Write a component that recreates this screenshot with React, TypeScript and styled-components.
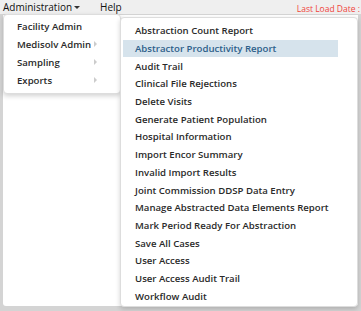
import React from 'react';
import styled, { createGlobalStyle } from 'styled-components';

const ADMIN_ITEMS = [
	{ id: 1, label: 'Facility Admin', sub: false },
	{ id: 2, label: 'Medisolv Admin', sub: true },
	{ id: 3, label: 'Sampling', sub: true },
	{ id: 4, label: 'Exports', sub: true },
] as const;

const REPORT_ITEMS = [
	'Abstraction Count Report',
	'Abstractor Productivity Report',
	'Audit Trail',
	'Clinical File Rejections',
	'Delete Visits',
	'Generate Patient Population',
	'Hospital Information',
	'Import Encor Summary',
	'Invalid Import Results',
	'Joint Commission DDSP Data Entry',
	'Manage Abstracted Data Elements Report',
	'Mark Period Ready For Abstraction',
	'Save All Cases',
	'User Access',
	'User Access Audit Trail',
	'Workflow Audit',
];

const GlobalStyle = createGlobalStyle`
	html, body {
		margin: 0;
		padding: 0;
		background: #ffffff;
	}
	body {
		font-family: 'Open Sans', 'Liberation Sans', sans-serif;
	}
`;

const Frame = styled.div`
	position: relative;
	width: 361px;
	height: 311px;
	overflow: hidden;
	display: flex;
	flex-direction: column;
	background: #d4d4d4;
`;

const NavBar = styled.div`
	height: 14px;
	display: flex;
	align-items: center;
	background: #efefef;
	padding: 0 0 0 3px;
	font-size: 10px;
	color: #111;
`;

const NavItem = styled.div<{ $gap?: number }>`
	display: flex;
	align-items: center;
	margin-right: ${({ $gap }) => $gap ?? 0}px;
	line-height: 14px;
`;

const Caret = styled.span`
	width: 0;
	height: 0;
	margin-left: 2px;
	border-left: 3px solid transparent;
	border-right: 3px solid transparent;
	border-top: 3px solid #333;
`;

const LastLoad = styled.div`
	margin-left: auto;
	font-size: 8.5px;
	color: #f0443c;
	white-space: nowrap;
	padding-top: 2px;
	margin-right: 1px;
`;

const Body = styled.div`
	flex: 1;
	margin: 1px 3px 5px 3px;
	background: #ffffff;
	border-radius: 0 0 3px 3px;
`;

const Menu = styled.div<{ $left: number; $top: number; $width: number; $height: number }>`
	position: absolute;
	left: ${({ $left }) => $left}px;
	top: ${({ $top }) => $top}px;
	width: ${({ $width }) => $width}px;
	height: ${({ $height }) => $height}px;
	box-sizing: border-box;
	background: #ffffff;
	border: 1px solid #dddddd;
	border-radius: 4px;
	box-shadow: 0 2px 5px rgba(0, 0, 0, 0.18);
	display: flex;
	flex-direction: column;
`;

const AdminList = styled.div`
	padding-top: 2px;
	display: flex;
	flex-direction: column;
`;

const AdminRow = styled.div`
	height: 18px;
	display: flex;
	align-items: center;
	justify-content: space-between;
	padding: 0 23px 0 13px;
	font-size: 9.6px;
	font-weight: 600;
	color: #2a2a2a;
	white-space: nowrap;
`;

const SubArrow = styled.span`
	width: 0;
	height: 0;
	border-top: 3px solid transparent;
	border-bottom: 3px solid transparent;
	border-left: 3px solid #cccccc;
`;

const ReportList = styled.div`
	padding: 4px 0 0 2px;
	display: flex;
	flex-direction: column;
`;

const ReportRow = styled.div<{ $active?: boolean }>`
	height: 17.7px;
	width: 215px;
	display: flex;
	align-items: center;
	padding-left: 12px;
	box-sizing: border-box;
	font-size: 9.6px;
	font-weight: 600;
	color: ${({ $active }) => ($active ? '#2d5f8a' : '#2a2a2a')};
	background: ${({ $active }) => ($active ? '#d6e3ec' : 'transparent')};
	white-space: nowrap;
`;

const App = () => {
	return (
		<Frame>
			<GlobalStyle />
			<NavBar>
				<NavItem $gap={20}>
					Administration
					<Caret />
				</NavItem>
				<NavItem>Help</NavItem>
				<LastLoad>Last Load Date :</LastLoad>
			</NavBar>
			<Body />

			<Menu $left={3} $top={14} $width={118} $height={80}>
				<AdminList>
					{ADMIN_ITEMS.map((item) => (
						<AdminRow key={item.id}>
							{item.label}
							{item.sub && <SubArrow />}
						</AdminRow>
					))}
				</AdminList>
			</Menu>

			<Menu $left={120} $top={17} $width={238} $height={290}>
				<ReportList>
					{REPORT_ITEMS.map((label, i) => (
						<ReportRow key={label} $active={i === 1}>
							{label}
						</ReportRow>
					))}
				</ReportList>
			</Menu>
		</Frame>
	);
};

export default App;
